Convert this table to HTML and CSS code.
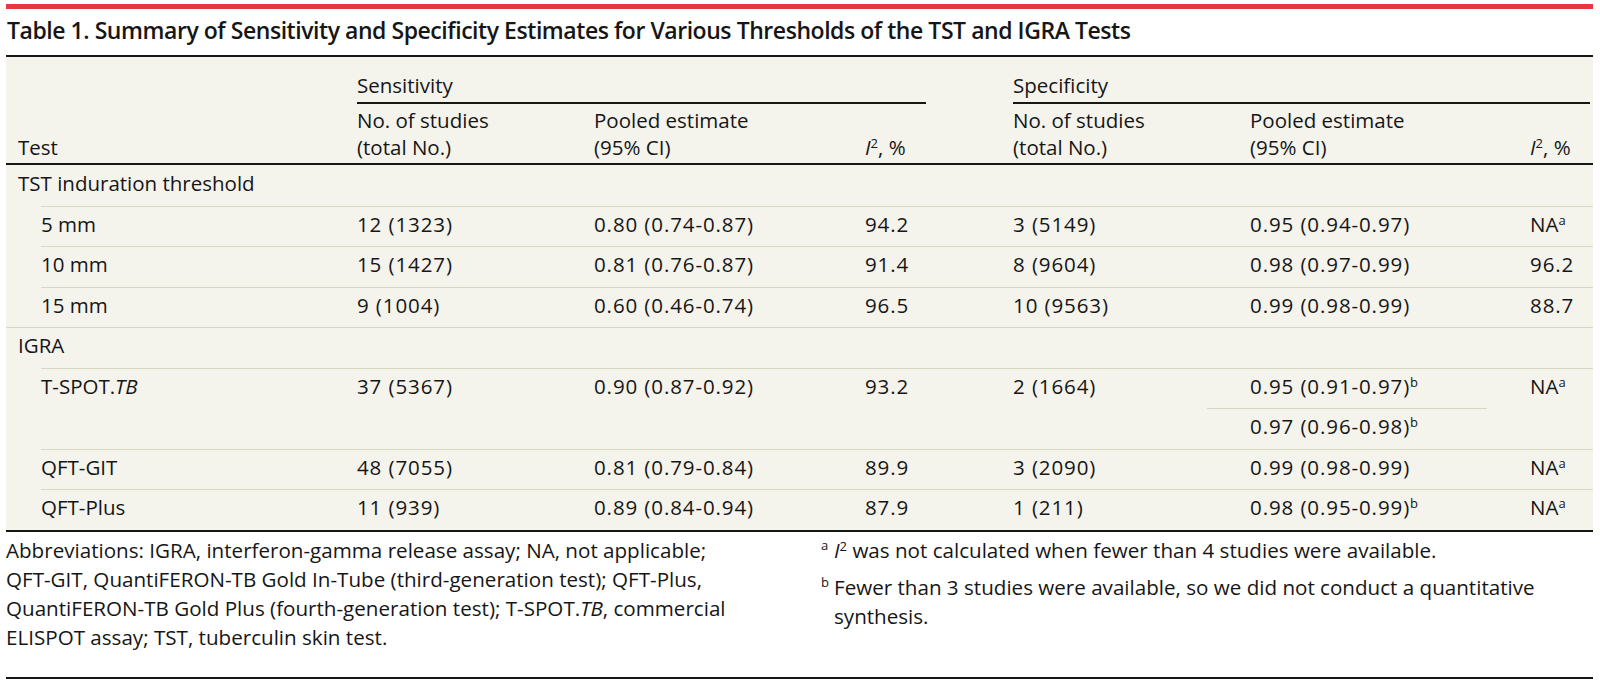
FILE: index.html
```html
<!DOCTYPE html>
<html lang="en">
<head>
<meta charset="utf-8">
<title>Table 1</title>
<link rel="stylesheet" href="styles.css">
</head>
<body>
<div class="page">
  <div class="redbar"></div>
  <h1 class="title">Table 1. Summary of Sensitivity and Specificity Estimates for Various Thresholds of the TST and IGRA Tests</h1>
  <table class="data">
    <colgroup>
      <col class="c-test"><col class="c-n"><col class="c-pool"><col class="c-i2">
      <col class="c-n"><col class="c-pool2"><col class="c-i2b">
    </colgroup>
    <thead>
      <tr class="h1">
        <th class="test" rowspan="2">Test</th>
        <th class="span" colspan="3"><div class="span-label sens">Sensitivity</div></th>
        <th class="span" colspan="3"><div class="span-label spec">Specificity</div></th>
      </tr>
      <tr class="h2">
        <th>No. of studies<br>(total No.)</th>
        <th>Pooled estimate<br>(95% CI)</th>
        <th><i>I</i><sup>2</sup>, %</th>
        <th>No. of studies<br>(total No.)</th>
        <th>Pooled estimate<br>(95% CI)</th>
        <th><i>I</i><sup>2</sup>, %</th>
      </tr>
    </thead>
    <tbody>
      <tr class="group first"><td colspan="7">TST induration threshold</td></tr>
      <tr class="sub">
        <td>5 mm</td><td class="num">12 (1323)</td><td class="num">0.80 (0.74-0.87)</td><td class="num">94.2</td>
        <td class="num">3 (5149)</td><td class="num">0.95 (0.94-0.97)</td><td>NA<sup>a</sup></td>
      </tr>
      <tr class="sub">
        <td>10 mm</td><td class="num">15 (1427)</td><td class="num">0.81 (0.76-0.87)</td><td class="num">91.4</td>
        <td class="num">8 (9604)</td><td class="num">0.98 (0.97-0.99)</td><td class="num">96.2</td>
      </tr>
      <tr class="sub">
        <td>15 mm</td><td class="num">9 (1004)</td><td class="num">0.60 (0.46-0.74)</td><td class="num">96.5</td>
        <td class="num">10 (9563)</td><td class="num">0.99 (0.98-0.99)</td><td class="num">88.7</td>
      </tr>
      <tr class="group"><td colspan="7">IGRA</td></tr>
      <tr class="sub">
        <td rowspan="2">T-SPOT.<i>TB</i></td><td rowspan="2" class="num">37 (5367)</td><td rowspan="2" class="num">0.90 (0.87-0.92)</td><td rowspan="2" class="num">93.2</td>
        <td rowspan="2" class="num">2 (1664)</td><td class="num">0.95 (0.91-0.97)<sup>b</sup></td><td rowspan="2">NA<sup>a</sup></td>
      </tr>
      <tr class="inner">
        <td class="num">0.97 (0.96-0.98)<sup>b</sup></td>
      </tr>
      <tr class="sub">
        <td>QFT-GIT</td><td class="num">48 (7055)</td><td class="num">0.81 (0.79-0.84)</td><td class="num">89.9</td>
        <td class="num">3 (2090)</td><td class="num">0.99 (0.98-0.99)</td><td>NA<sup>a</sup></td>
      </tr>
      <tr class="sub">
        <td>QFT-Plus</td><td class="num">11 (939)</td><td class="num">0.89 (0.84-0.94)</td><td class="num">87.9</td>
        <td class="num">1 (211)</td><td class="num">0.98 (0.95-0.99)<sup>b</sup></td><td>NA<sup>a</sup></td>
      </tr>
    </tbody>
  </table>
  <div class="notes">
    <p class="abbr">Abbreviations: IGRA, interferon-gamma release assay; NA, not applicable; QFT-GIT, QuantiFERON-TB Gold In-Tube (third-generation test); QFT-Plus, QuantiFERON-TB Gold Plus (fourth-generation test); T-SPOT.<i>TB</i>, commercial ELISPOT assay; TST, tuberculin skin test.</p>
    <div class="fns">
      <p class="fn"><span class="mark">a</span><i>I</i><sup>2</sup> was not calculated when fewer than 4 studies were available.</p>
      <p class="fn"><span class="mark">b</span>Fewer than 3 studies were available, so we did not conduct a quantitative synthesis.</p>
    </div>
  </div>
</div>
</body>
</html>
```

FILE: styles.css
```css
:root {
  --ink: #161616;
  --beige: #f4f3ec;
  --rule: #d9d6c6;
  --red: #e6383e;
}

html, body {
  margin: 0;
  padding: 0;
  background: #ffffff;
}

body {
  font-family: "Open Sans", "Noto Sans", "DejaVu Sans", sans-serif;
  color: var(--ink);
  font-size: 20.5px;
}

.page {
  margin-left: 6px;
  width: 1587px;
}

.redbar {
  margin-top: 4px;
  height: 5px;
  background: var(--red);
}

.title {
  margin: 6px 0 10px 1px;
  font-size: 23px;
  line-height: 30px;
  font-weight: 600;
  letter-spacing: -0.45px;
  white-space: nowrap;
}

.data {
  width: 1587px;
  table-layout: fixed;
  border-collapse: separate;
  border-spacing: 0;
  background: var(--beige);
  border-top: 2px solid var(--ink);
  border-bottom: 2px solid var(--ink);
  font-size: 20.5px;
  line-height: 27px;
}

.c-test { width: 308px; }
.c-n { width: 237px; }
.c-pool { width: 271px; }
.c-i2 { width: 148px; }
.c-pool2 { width: 280px; }
.c-i2b { width: 106px; }

th {
  font-weight: 500;
  text-align: left;
  padding: 0 0 0 43px;
}

th.test {
  padding: 0 0 2.5px 12px;
  vertical-align: bottom;
  border-bottom: 2px solid var(--ink);
}

th.span {
  padding-top: 14.5px;
  vertical-align: top;
}

.span-label {
  padding-bottom: 3.5px;
  border-bottom: 2px solid var(--ink);
}

.span-label.sens { margin-right: 44px; }
.span-label.spec { margin-right: 3px; }

.h2 th {
  padding-top: 2.5px;
  padding-bottom: 2.5px;
  vertical-align: bottom;
  border-bottom: 2px solid var(--ink);
}

td {
  padding: 4.25px 0 8.25px 43px;
  vertical-align: top;
  border-top: 1px solid var(--rule);
  white-space: nowrap;
}

td.num {
  letter-spacing: 0.9px;
}

.group td {
  padding-left: 12px;
}

.group.first td {
  border-top-color: transparent;
}

.sub td:first-child {
  padding-left: 35px;
  border-top-color: transparent;
  background: linear-gradient(var(--rule), var(--rule)) no-repeat;
  background-origin: border-box;
  background-position: 35px 0;
  background-size: calc(100% - 35px) 1px;
}

sup {
  font-size: 13px;
  line-height: 0;
  letter-spacing: 0;
  vertical-align: 7.5px;
}

i {
  font-style: italic;
}

.notes {
  display: grid;
  grid-template-columns: 740px 1fr;
  column-gap: 75px;
  margin-top: 4px;
  padding-bottom: 25px;
  border-bottom: 2px solid var(--ink);
  font-size: 20.6px;
  line-height: 29px;
}

.notes p {
  margin: 0;
}

.fns {
  display: flex;
  flex-direction: column;
  gap: 8px;
}

.fn {
  padding-left: 13px;
  text-indent: -13px;
}

.mark {
  display: inline-block;
  width: 13px;
  text-indent: 0;
  font-size: 13px;
  line-height: 0;
  vertical-align: 7.5px;
}
```
